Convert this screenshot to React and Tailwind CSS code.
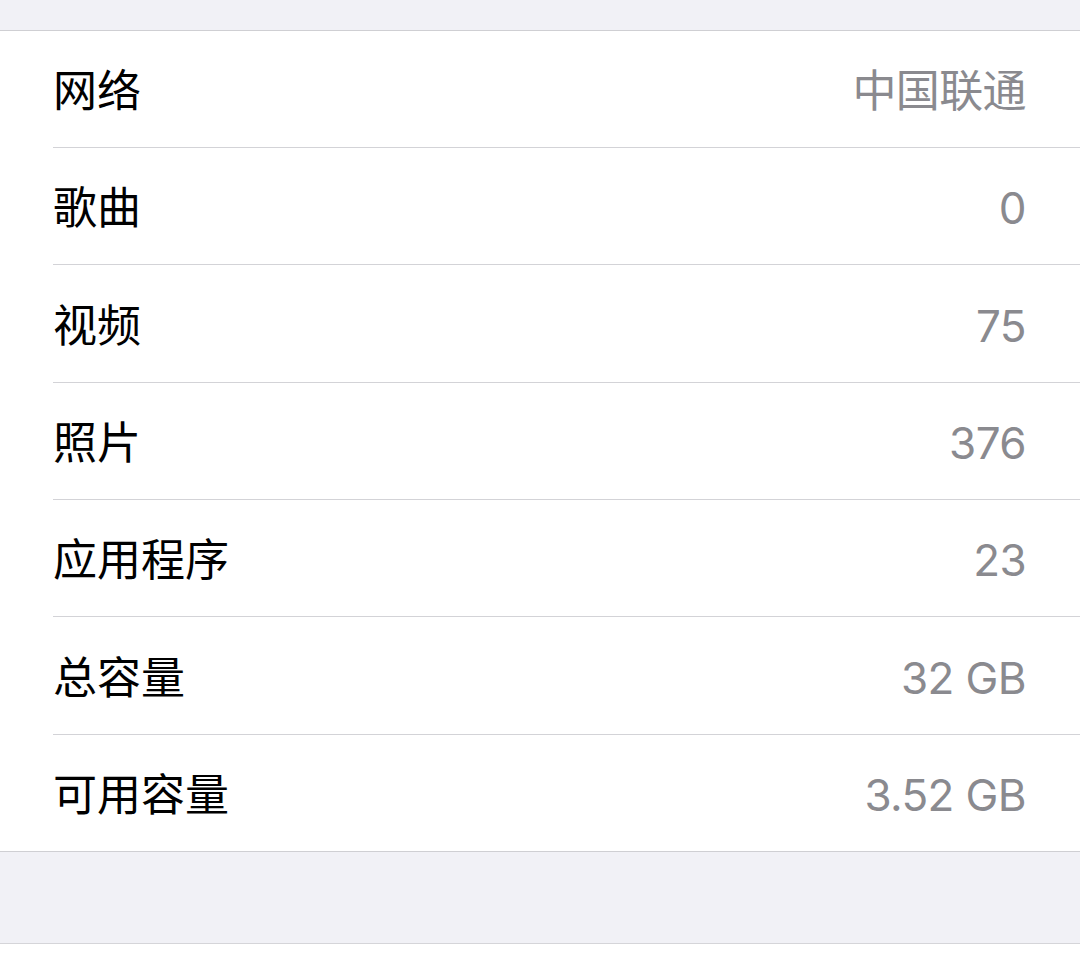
export default function App() {
  const rows = [
    ["网络", "中国联通", "h-[116px]"],
    ["歌曲", "0", "h-[117px]"],
    ["视频", "75", "h-[118px]"],
    ["照片", "376", "h-[117px]"],
    ["应用程序", "23", "h-[117px]"],
    ["总容量", "32 GB", "h-[118px]"],
    ["可用容量", "3.52 GB", "h-[117px]"],
  ];
  return (
    <div
      className="w-[1080px] h-[960px] bg-[#f1f1f6] flex flex-col"
      style={{ fontFamily: '"Inter", "Noto Sans CJK SC", sans-serif' }}
    >
      <div className="h-[30px] shrink-0" />
      <div className="bg-white border-t border-b border-[#cfcfd3] shrink-0">
        {rows.map(([k, v, h], i) => (
          <div key={k} className="pl-[53px]">
            <div
              className={
                h +
                " flex items-center justify-between pr-[54px] pt-[4px] text-[44px] " +
                (i > 0 ? "border-t border-[#d3d3d7]" : "")
              }
            >
              <span className="text-black">{k}</span>
              <span className="text-[#8a8a8f] tracking-[-0.6px]">{v}</span>
            </div>
          </div>
        ))}
      </div>
      <div className="h-[92px] shrink-0 border-b border-[#d5d5d9]" />
      <div className="flex-1 bg-white" />
    </div>
  );
}
